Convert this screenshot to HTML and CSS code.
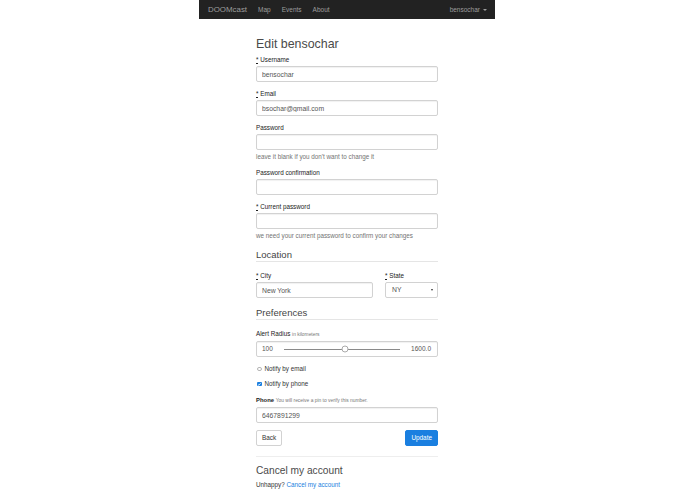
FILE: index.html
```html
<!DOCTYPE html>
<html lang="en">
<head>
<meta charset="utf-8">
<title>Edit bensochar</title>
<link rel="stylesheet" href="styles.css">
</head>
<body>
<div class="page">
<nav class="navbar">
  <div class="nav-left">
    <a class="brand" href="#">DOOMcast</a>
    <a class="nav-link" href="#">Map</a>
    <a class="nav-link" href="#">Events</a>
    <a class="nav-link" href="#">About</a>
  </div>
  <div class="user-menu">bensochar<span class="caret"></span></div>
</nav>

<main class="container">
  <h1 class="page-title">Edit bensochar</h1>
  <form class="form">
    <div class="form-group">
      <label class="form-label"><abbr class="req" title="required">*</abbr> Username</label>
      <input class="form-control" type="text" value="bensochar">
    </div>
    <div class="form-group">
      <label class="form-label"><abbr class="req" title="required">*</abbr> Email</label>
      <input class="form-control" type="text" value="bsochar@gmail.com">
    </div>
    <div class="form-group">
      <label class="form-label">Password</label>
      <input class="form-control" type="password" value="">
      <div class="help">leave it blank if you don't want to change it</div>
    </div>
    <div class="form-group">
      <label class="form-label">Password confirmation</label>
      <input class="form-control" type="password" value="">
    </div>
    <div class="form-group">
      <label class="form-label"><abbr class="req" title="required">*</abbr> Current password</label>
      <input class="form-control" type="password" value="">
      <div class="help">we need your current password to confirm your changes</div>
    </div>

    <h2 class="legend">Location</h2>
    <div class="form-row">
      <div class="form-group">
        <label class="form-label"><abbr class="req" title="required">*</abbr> City</label>
        <input class="form-control" type="text" value="New York">
      </div>
      <div class="form-group">
        <label class="form-label"><abbr class="req" title="required">*</abbr> State</label>
        <div class="select"><span>NY</span><span class="select-caret"></span></div>
      </div>
    </div>

    <h2 class="legend">Preferences</h2>
    <div class="form-group">
      <label class="form-label">Alert Radius <small class="hint">in kilometers</small></label>
      <div class="slider">
        <span>100</span>
        <div class="track"><span class="thumb"></span></div>
        <span>1600.0</span>
      </div>
    </div>
    <div class="checks">
      <div class="check-row"><span class="radio"></span><span>Notify by email</span></div>
      <div class="check-row"><span class="checkbox"><svg viewBox="0 0 10 10" width="4.5" height="4.5"><path d="M2 5.2 L4.2 7.3 L8 2.8" fill="none" stroke="#fff" stroke-width="1.8"/></svg></span><span>Notify by phone</span></div>
    </div>
    <div class="form-group">
      <label class="form-label"><span class="strong">Phone</span> <small class="hint">You will receive a pin to verify this number.</small></label>
      <input class="form-control" type="text" value="6467891299">
    </div>
    <div class="actions">
      <button type="button" class="btn btn-default">Back</button>
      <button type="button" class="btn btn-primary">Update</button>
    </div>
  </form>

  <hr class="divider">
  <h2 class="section-title">Cancel my account</h2>
  <p class="cancel-text">Unhappy? <a href="#" class="link">Cancel my account</a></p>
</main>
</div>
</body>
</html>
```

FILE: styles.css
```css
* { box-sizing: border-box; }

body {
  margin: 0;
  font-family: "Liberation Sans", Arial, Helvetica, sans-serif;
  font-size: 6.3px;
  line-height: 10px;
  color: #333;
  background: #fff;
}

.page {
  width: 694px;
}

.navbar {
  width: 296px;
  height: 19px;
  margin: 0 auto;
  background: #222;
  display: flex;
  align-items: center;
  justify-content: space-between;
  padding: 0 8px 0 9px;
  color: #9d9d9d;
}

.nav-left {
  display: flex;
  align-items: center;
  gap: 11px;
}

.brand {
  font-size: 7.9px;
  color: #9d9d9d;
  text-decoration: none;
}

.nav-link {
  font-size: 6.5px;
  color: #9d9d9d;
  text-decoration: none;
}

.user-menu {
  font-size: 6.5px;
  display: flex;
  align-items: center;
}

.caret {
  width: 0;
  height: 0;
  border-top: 2px solid #9d9d9d;
  border-left: 2px solid transparent;
  border-right: 2px solid transparent;
  margin-left: 3px;
}

.container {
  width: 182px;
  margin: 0 auto;
}

.page-title {
  font-size: 12.4px;
  font-weight: normal;
  line-height: 14px;
  margin: 18px 0 4px;
  color: #4a4a4a;
}

.form { margin: 0; }

.form-group { margin-bottom: 7px; }

.form-label {
  display: block;
  font-weight: normal;
  font-size: 6.3px;
  line-height: 10px;
  margin-bottom: 1px;
  color: #222;
}

.strong { font-weight: bold; font-size: 5.9px; }

.req {
  text-decoration: underline dotted;
}

.hint {
  font-weight: normal;
  font-size: 4.9px;
  color: #777;
}

.form-control {
  display: block;
  width: 100%;
  height: 16px;
  margin: 0;
  padding: 0 5px;
  border: 1px solid #d2d2d2;
  border-radius: 2px;
  font-family: "Liberation Sans", Arial, sans-serif;
  font-size: 6.8px;
  color: #555;
  background: #fff;
  box-shadow: inset 0 1px 1px rgba(0, 0, 0, 0.06);
  outline: none;
}

.help {
  color: #737373;
  font-size: 6.3px;
  line-height: 9px;
  margin-top: 2px;
}

.legend {
  font-size: 9.5px;
  font-weight: normal;
  line-height: 12px;
  border-bottom: 1px solid #e5e5e5;
  margin: 9px 0 9px;
  color: #444;
}

.form-row {
  display: grid;
  grid-template-columns: 117px 53px;
  column-gap: 12px;
  margin-bottom: 7px;
}

.form-row .form-group { margin-bottom: 0; }

.select {
  display: flex;
  justify-content: space-between;
  align-items: center;
  height: 16px;
  border: 1px solid #d2d2d2;
  border-radius: 2px;
  padding: 0 4px 0 6px;
  font-size: 6.8px;
  color: #555;
  background: #fff;
}

.select-caret {
  width: 0;
  height: 0;
  border-top: 2px solid #333;
  border-left: 1.5px solid transparent;
  border-right: 1.5px solid transparent;
}

.slider {
  display: flex;
  align-items: center;
  gap: 11px;
  height: 16px;
  border: 1px solid #d2d2d2;
  border-radius: 2px;
  padding: 0 6px 0 5px;
  font-size: 6.5px;
  color: #555;
  box-shadow: inset 0 1px 1px rgba(0, 0, 0, 0.06);
}

.track {
  flex: 1;
  height: 1px;
  background: #8a8a8a;
  position: relative;
}

.thumb {
  position: absolute;
  left: 52.6%;
  top: 50%;
  width: 7px;
  height: 7px;
  border-radius: 50%;
  border: 1px solid #aaa;
  background: #fff;
  transform: translate(-50%, -50%);
}

.checks { margin-bottom: 6px; }

.check-row {
  display: flex;
  align-items: center;
  gap: 3px;
  line-height: 10px;
  margin-bottom: 5px;
  padding-left: 1px;
  font-size: 6.3px;
}

.radio {
  width: 4.5px;
  height: 4.5px;
  border-radius: 50%;
  border: 0.8px solid #b5b5b5;
  background: #fff;
}

.checkbox {
  width: 4.5px;
  height: 4.5px;
  border-radius: 1px;
  background: #1a7fe0;
  display: flex;
}

.actions {
  display: flex;
  justify-content: space-between;
}

.btn {
  height: 16px;
  padding: 0 5px;
  font-family: "Liberation Sans", Arial, sans-serif;
  font-size: 6.4px;
  border-radius: 2px;
  border: 1px solid #d2d2d2;
  line-height: 14px;
  cursor: pointer;
}

.btn-default {
  background: #fff;
  color: #333;
}

.btn-primary {
  background: #1a7fe0;
  border-color: #1a7fe0;
  color: #fff;
}

.divider {
  height: 0;
  border: 0;
  border-top: 1px solid #eee;
  margin: 10px 0 0;
}

.section-title {
  font-size: 10.2px;
  font-weight: normal;
  line-height: 12px;
  margin: 8px 0 3px;
  color: #4a4a4a;
}

.cancel-text {
  margin: 0;
  font-size: 6.3px;
  line-height: 10px;
}

.link {
  color: #1a7fe0;
  text-decoration: none;
}
```
